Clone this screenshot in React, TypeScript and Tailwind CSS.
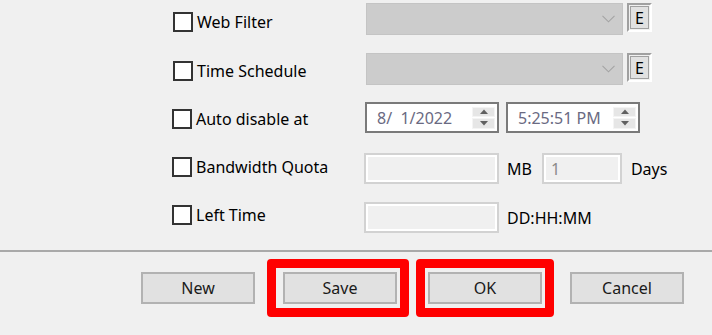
import React from "react";

function Check() {
  return <div className="w-[20px] h-[20px] border-2 border-[#333333] bg-white shrink-0" />;
}

function Combo() {
  return (
    <div className="w-[257px] h-[32px] bg-[#cccccc] border border-[#c4c4c4] flex items-center justify-end pr-[7px]">
      <svg width="13" height="8" viewBox="0 0 13 8">
        <path d="M0.5 0.8 L6.5 6.8 L12.5 0.8" fill="none" stroke="#a3a3a3" strokeWidth="1.1" />
      </svg>
    </div>
  );
}

function EButton() {
  return (
    <div className="ml-[4px] w-[25px] h-[29px] border-t-2 border-l-2 border-[#a0a0a0] border-r-2 border-b-2 border-r-white border-b-white bg-[#f0f0f0] p-px flex">
      <div className="flex-1 border border-[#a0a0a0] bg-[#e1e1e1] flex items-center justify-center text-[16px] leading-none text-black">
        E
      </div>
    </div>
  );
}

function Spin() {
  return (
    <div className="w-[23px] h-[22px] flex flex-col gap-px">
      <div className="flex-1 bg-[#e6e6e6] border border-[#f4f4f4] flex items-center justify-center">
        <svg width="8" height="5" viewBox="0 0 8 5">
          <path d="M0 5 L4 0.5 L8 5 Z" fill="#606060" />
        </svg>
      </div>
      <div className="flex-1 bg-[#e6e6e6] border border-[#f4f4f4] flex items-center justify-center">
        <svg width="8" height="5" viewBox="0 0 8 5">
          <path d="M0 0 L4 4.5 L8 0 Z" fill="#606060" />
        </svg>
      </div>
    </div>
  );
}

function Picker({ text, extra = "" }: { text: string; extra?: string }) {
  return (
    <div className={`w-[134px] h-[31px] border-2 border-[#7a7a7a] bg-white flex items-center justify-between pl-[10px] pr-[2px] ${extra}`}>
      <span className="whitespace-pre text-[16px] leading-[20px] text-[#6a6a82]">{text}</span>
      <Spin />
    </div>
  );
}

function Field({ w, children }: { w: string; children?: React.ReactNode }) {
  return (
    <div className={`${w} h-[31px] border-2 border-[#d2d2d2] bg-[#f0f0f0] shadow-[inset_0_0_0_2px_#ffffff] flex items-center pl-[7px] text-[16px] leading-[20px] text-[#8a8a8a]`}>
      {children}
    </div>
  );
}

function Label({ children }: { children: React.ReactNode }) {
  return <span className="text-[16px] leading-[20px] text-black whitespace-nowrap">{children}</span>;
}

function Btn({ label, box, extra = "" }: { label: string; box?: string; extra?: string }) {
  return (
    <div className={`relative w-[114px] h-[32px] ${extra}`}>
      <div className="w-full h-full border-2 border-[#b2b2b2] bg-[#e1e1e1] flex items-center justify-center text-[16px] leading-[20px] text-[#1a1a1a]">
        {label}
      </div>
      {box && <div className={`absolute border-[9px] border-[#ff0000] rounded-[4px] ${box}`} />}
    </div>
  );
}

export default function App() {
  return (
    <div className="w-[712px] h-[335px] bg-[#f0f0f0] flex flex-col overflow-hidden font-['Noto_Sans',sans-serif]">
      <div className="flex flex-col pl-[172px]">
        {/* Row 1 */}
        <div className="flex items-start h-[48px]">
          <div className="ml-px w-[193px] mt-[12px] flex items-center gap-[4px]">
            <Check />
            <Label>Web Filter</Label>
          </div>
          <div className="mt-[3px] flex">
            <Combo />
            <EButton />
          </div>
        </div>
        {/* Row 2 */}
        <div className="flex items-start h-[48px]">
          <div className="ml-px w-[193px] mt-[13px] flex items-center gap-[4px]">
            <Check />
            <Label>Time Schedule</Label>
          </div>
          <div className="mt-[5px] flex">
            <Combo />
            <EButton />
          </div>
        </div>
        {/* Row 3 */}
        <div className="flex items-start h-[48px]">
          <div className="w-[193px] mt-[13px] flex items-center gap-[4px]">
            <Check />
            <Label>Auto disable at</Label>
          </div>
          <div className="mt-[6px] flex">
            <Picker text="8/  1/2022" />
            <Picker text="5:25:51 PM" extra="ml-[7px]" />
          </div>
        </div>
        {/* Row 4 */}
        <div className="flex items-start h-[48px]">
          <div className="w-[192px] mt-[13px] flex items-center gap-[4px]">
            <Check />
            <Label>Bandwidth Quota</Label>
          </div>
          <div className="mt-[9px] flex items-center">
            <Field w="w-[135px]" />
            <span className="ml-[8px]"><Label>MB</Label></span>
            <div className="ml-[10px]">
              <Field w="w-[80px]">1</Field>
            </div>
            <span className="ml-[9px]"><Label>Days</Label></span>
          </div>
        </div>
        {/* Row 5 */}
        <div className="flex items-start h-[48px]">
          <div className="w-[192px] mt-[13px] flex items-center gap-[4px]">
            <Check />
            <Label>Left Time</Label>
          </div>
          <div className="mt-[10px] flex items-center">
            <Field w="w-[135px]" />
            <span className="ml-[8px]"><Label>DD:HH:MM</Label></span>
          </div>
        </div>
      </div>
      <div className="mt-[10px] h-[2px] bg-[#a9a9a9]" />
      <div className="flex pt-[20px] pl-[141px]">
        <Btn label="New" />
        <Btn label="Save" extra="ml-[28px]" box="left-[-16px] top-[-13px] right-[-12px] bottom-[-13px]" />
        <Btn label="OK" extra="ml-[31px]" box="left-[-12px] top-[-13px] right-[-12px] bottom-[-13px]" />
        <Btn label="Cancel" extra="ml-[28px]" />
      </div>
    </div>
  );
}
